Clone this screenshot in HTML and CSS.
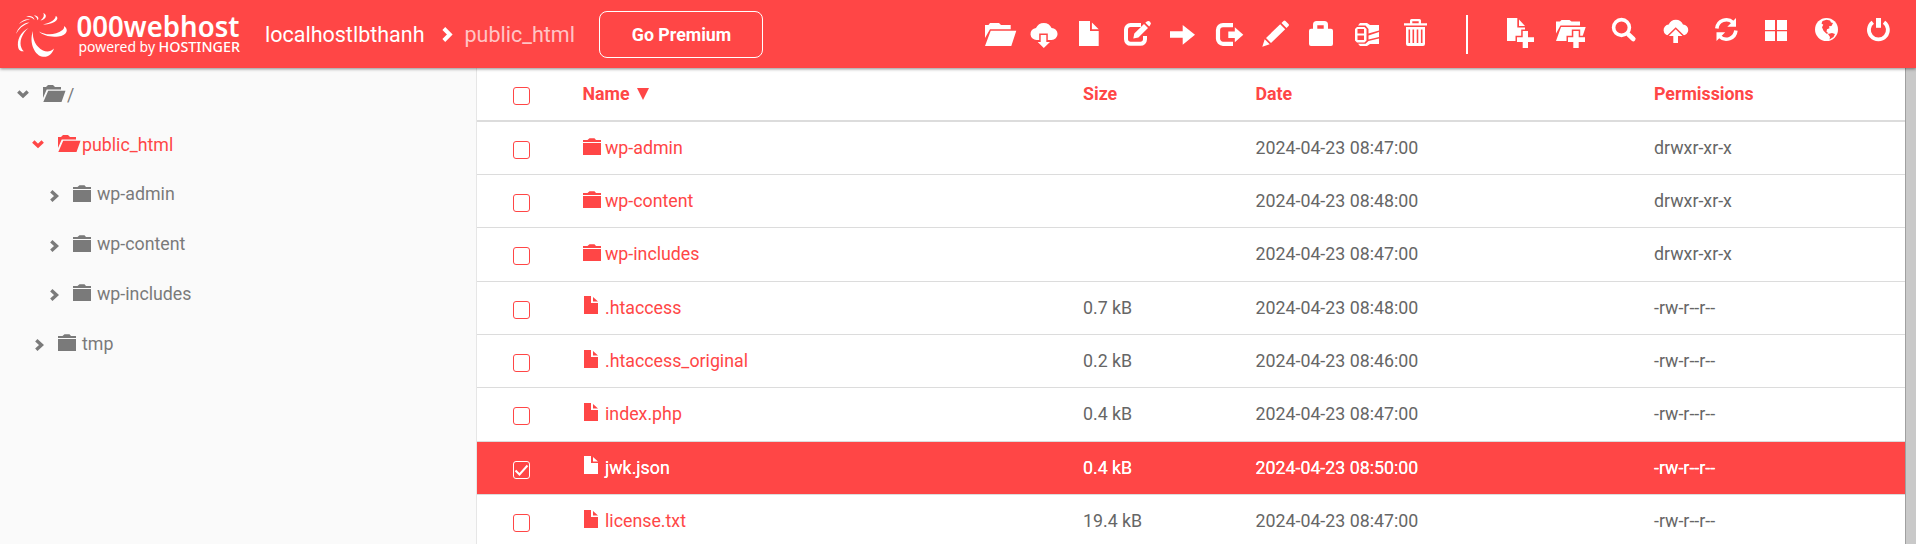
FILE: index.html
```html
<!DOCTYPE html>
<html lang="en">
<head>
<meta charset="utf-8">
<title>File manager</title>
<link rel="stylesheet" href="styles.css">
</head>
<body>
<svg class="sprite" aria-hidden="true">
  <symbol id="folder" viewBox="0 0 18 17"><path d="M0 2h4.500L6.500.2h5L13 2h5v2H0zM0 5h18v12H0z"/></symbol>
  <symbol id="folder-open" viewBox="0 0 23 17"><path d="M0 2h3L5 0h5l2 2h6v2.600H3.700L0 13zM5.200 5.700H22.500L18.500 17H.3z"/></symbol>
  <symbol id="file" viewBox="0 0 14 18"><path d="M0 0h7v7h7v11H0zM9 1l5 4.500H9z"/></symbol>
  <symbol id="right" viewBox="0 0 9 12"><path d="M1.300 1.300 6.500 6 1.300 10.700" class="chev"/></symbol>
  <symbol id="down" viewBox="0 0 12 9"><path d="M1.300 1.500 6 6 10.700 1.500" class="chev"/></symbol>
</svg>

<header class="topbar">
  <svg class="logo" width="184" height="68" viewBox="0 0 184 68">
    <g transform="translate(-10 0)">
      <path d="M39 31.500c7 4 16 4 23.500-1.500 1.600-1.200 1.800-2.600 1.400-4 2.500 1.600 3.500 4 2.500 6-1.200 2.400-4 4-8 4.400C50.500 37.400 43 35.500 39 31.500z"/>
      <path d="M33 31c-1 8 3 16 10 19.500 4.500 2 8 .8 11-2-1.500 5-5.500 8.800-11 8.300C35 56 28.500 43 33 31z"/>
      <path d="M28.500 28c-7 6-9.500 14-7 20 .5 1.500 1.500 2.600 2.500 3.300-3 .2-5-.8-5.700-3.300C16.500 40 20.500 32 28.500 28z"/>
      <path d="M29.500 22.500c-6.500.5-11.500 5-13.500 11.500 2.500-5 7-9 13.500-11.500z"/>
      <path d="M30 19.500c-4-1-8 1-11 4.500 3.500-2.500 7-4 11-4.500z"/>
      <path d="M34.500 20c-.5-3.500-5-5-8.500-3.300 3.500-.2 6.500.8 8.500 3.300z"/>
      <path d="M37.500 20.200c2-2 .5-4.500-3.500-5 1.500 1.200 3.300 2.500 3.500 5z"/>
      <path d="M40.500 20.500c6-1 7-6 2.800-7.500 1.200 2.200.5 5-2.800 7.500z"/>
      <path d="M43 24.500c6 0 12-1.500 14-5 .8-1.500.3-3-1.300-3.500 0 3.500-5 7-12.700 8.500z"/>
    </g>
    <text class="logo-name" x="66.500" y="37" textLength="163" lengthAdjust="spacingAndGlyphs">000webhost</text>
    <text class="logo-by" x="68.500" y="51.500" textLength="76.500" lengthAdjust="spacingAndGlyphs">powered by</text>
    <text class="logo-host" x="148.500" y="51.500" textLength="81.500" lengthAdjust="spacingAndGlyphs">HOSTINGER</text>
  </svg>
  <nav class="crumbs">
    <span>localhostlbthanh</span>
    <svg width="11" height="15" viewBox="0 0 11 15"><path d="M1.800 1.500 7.800 7.500 1.800 13.500" class="crumb-arrow"/></svg>
    <span class="current">public_html</span>
  </nav>
  <a class="premium">Go Premium</a>

  <div class="tools">
    <svg viewBox="0 0 46 68"><path d="M8 25h3.500l1.500-2h9l2 2h9.700v4.200H13L8 38zM13.700 30.700H39.300L34.300 46H8z"/></svg>
    <svg viewBox="0 0 46 68"><path d="M14 40a6 6 0 0 1-1-12A8.500 8.500 0 0 1 28.600 28 6 6 0 0 1 28.500 40z"/><path class="cut" d="M17.700 35h5.600v7H27l-6.200 6-6.100-6h3z"/></svg>
    <svg viewBox="0 0 46 68"><path d="M10 21h11v10h8.700v15H10zM22.900 22.500l6.800 6.800h-6.800z"/></svg>
    <svg viewBox="0 0 46 68"><path class="line" stroke-width="4" d="M26 25H15.500a4.500 4.500 0 0 0-4.500 4.500V39.300a4.500 4.500 0 0 0 4.500 4.500H25.500a4.500 4.500 0 0 0 4.500-4.500V36"/><path d="M18.300 38.500l1-5L29 24l4 4-9.600 9.500zM30.300 22.700l1.200-.9a2.400 2.400 0 0 1 3.600 3.500l-.9 1.200z"/></svg>
    <svg viewBox="0 0 46 68"><path d="M9 31.300h12.700V25L34 34.800 21.700 44.700v-7H9z"/></svg>
    <svg viewBox="0 0 46 68"><path class="line" stroke-width="4.200" d="M26 25.100H16a5 5 0 0 0-5 5v8.700a5 5 0 0 0 5 5h10"/><path d="M21.300 31.500h6.500v-4.300l8.500 7.500-8.500 7.500v-4.300h-6.500z"/></svg>
    <svg viewBox="0 0 46 68"><path d="M9.300 46.700l2.400-7.400 5 5zM13 38L27.200 24.200l5 5L18 43zM28.500 23l2-2a1.500 1.500 0 0 1 2 0L35.500 24a1.500 1.500 0 0 1 0 2l-2 2z"/></svg>
    <svg viewBox="0 0 46 68"><path fill-rule="evenodd" d="M14 28.700v-4a3.700 3.700 0 0 1 3.700-3.700h7.600a3.700 3.700 0 0 1 3.700 3.700v4h3a2 2 0 0 1 2 2V44a2 2 0 0 1-2 2H12a2 2 0 0 1-2-2V30.700a2 2 0 0 1 2-2zM18.300 28.700h6.400v-3.400h-6.400z"/></svg>
    <svg viewBox="0 0 46 68"><path fill-rule="evenodd" d="M12 27h7.500l2 2v11.500l-2 2H12l-2-2V29zM12.500 29v4.500h6.500V29zM12.500 35.500v4.500h6.500v-4.500z"/><path d="M13 25.500l2-2.500h7l3 2h9v5.500l-10.500 3V29l-3-3.500zM23.500 35.500L34 32v5l-10.500 2.500zM13 43.700l2 2.300h7l3-2h9v-5.500L23.500 41l-3 2.700z"/></svg>
    <svg viewBox="0 0 46 68"><path fill-rule="evenodd" d="M13 23.200h6V20.500a1.500 1.500 0 0 1 1.500-1.500h8a1.500 1.500 0 0 1 1.500 1.500v2.700h6v2.300H13zM21.300 21.200v2h6.400v-2zM15 27h19v17a2 2 0 0 1-2 2H17a2 2 0 0 1-2-2zM17.500 29.500v13.500h1.600V29.500zM21.500 29.500v13.500h1.600V29.500zM25.700 29.500v13.500h1.600V29.500zM29.900 29.500v13.500h1.600V29.500z"/></svg>
  </div>
  <div class="divider"></div>
  <div class="tools wide">
    <svg viewBox="0 0 51 68"><path d="M9 18h10.300v9.500H27V41H9zM21 19.500l6 6.500h-6z"/><path class="cut" d="M24.700 31h5.300v6.300h6V42h-6v6h-5.300v-6H19v-4.700h5.700z"/></svg>
    <svg viewBox="0 0 51 68"><path d="M7 21.500h4l1.500-1.500h8l2 1.500h8.500v4H11.500L7 33.500zM12 27h24.700L32 41H7z"/><path class="cut" d="M24.300 31h5.400v6.300h6.300V42h-6.300v6h-5.400v-6H19v-4.700h5.300z"/></svg>
    <svg viewBox="0 0 51 68"><circle class="line" stroke-width="3.600" cx="21.500" cy="27.500" r="7.900"/><path class="line" stroke-width="4.600" stroke-linecap="round" d="M28.500 34.500L33.300 39"/></svg>
    <svg viewBox="0 0 51 68"><path d="M18.500 35.500a5.500 5.500 0 0 1-.8-11 7.800 7.800 0 0 1 14.300 0 5.500 5.500 0 0 1-.5 11z"/><path class="cut" d="M24.700 29.300l6.800 6.700H27v7h-4.700v-7h-4.500z"/></svg>
    <svg viewBox="0 0 51 68"><path class="line" stroke-width="3.600" d="M14.800 28.500A9.600 9.600 0 0 1 31 22.500M33.900 30.500A9.600 9.600 0 0 1 17.700 36.500"/><path d="M34 18v8.700h-8.700zM14.500 41v-8.700h8.700z"/></svg>
    <svg viewBox="0 0 51 68"><path d="M12 20h10v10H12zM24 20h10v10H24zM12 31.300h10V41H12zM24 31.300h10V41H24z"/></svg>
    <svg viewBox="0 0 51 68"><circle cx="22.500" cy="29.500" r="11.500"/><path class="land" d="M18.500 21l4-1.200 3.500.7 1 2 2 .5-1.500 3-2.500.2.500 2-2.500 1-.5 2.500 2 1.500-2 .5-3-3-1.500-3.500 1.300-2.500-1.800-1.200zM24 34l4-1 3 1-1.500 3-4 2.500.5-2.500z"/></svg>
    <svg viewBox="0 0 51 68"><path class="line" stroke-width="3.800" d="M17.800 22.200A9.500 9.500 0 1 0 29 22.200"/><path d="M21 18h5v9.800h-5z"/></svg>
  </div>
</header>

<main class="layout">
  <aside class="tree">
    <div class="node"><svg class="down"><use href="#down"/></svg><svg class="open"><use href="#folder-open"/></svg><span>/</span></div>
    <div class="node l1 active"><svg class="down"><use href="#down"/></svg><svg class="open"><use href="#folder-open"/></svg><span>public_html</span></div>
    <div class="node l2"><svg class="right"><use href="#right"/></svg><svg class="folder"><use href="#folder"/></svg><span>wp-admin</span></div>
    <div class="node l2"><svg class="right"><use href="#right"/></svg><svg class="folder"><use href="#folder"/></svg><span>wp-content</span></div>
    <div class="node l2"><svg class="right"><use href="#right"/></svg><svg class="folder"><use href="#folder"/></svg><span>wp-includes</span></div>
    <div class="node l1"><svg class="right"><use href="#right"/></svg><svg class="folder"><use href="#folder"/></svg><span>tmp</span></div>
  </aside>

  <section class="files">
    <div class="row head"><i class="box"></i><b class="name">Name <svg class="sort" viewBox="0 0 12 12"><path d="M0 0h12L6 12z"/></svg></b><b>Size</b><b>Date</b><b>Permissions</b></div>
    <div class="row"><i class="box"></i><a class="name"><svg class="folder"><use href="#folder"/></svg>wp-admin</a><span></span><span>2024-04-23 08:47:00</span><span>drwxr-xr-x</span></div>
    <div class="row"><i class="box"></i><a class="name"><svg class="folder"><use href="#folder"/></svg>wp-content</a><span></span><span>2024-04-23 08:48:00</span><span>drwxr-xr-x</span></div>
    <div class="row"><i class="box"></i><a class="name"><svg class="folder"><use href="#folder"/></svg>wp-includes</a><span></span><span>2024-04-23 08:47:00</span><span>drwxr-xr-x</span></div>
    <div class="row"><i class="box"></i><a class="name"><svg class="file"><use href="#file"/></svg>.htaccess</a><span>0.7 kB</span><span>2024-04-23 08:48:00</span><span>-rw-r--r--</span></div>
    <div class="row"><i class="box"></i><a class="name"><svg class="file"><use href="#file"/></svg>.htaccess_original</a><span>0.2 kB</span><span>2024-04-23 08:46:00</span><span>-rw-r--r--</span></div>
    <div class="row"><i class="box"></i><a class="name"><svg class="file"><use href="#file"/></svg>index.php</a><span>0.4 kB</span><span>2024-04-23 08:47:00</span><span>-rw-r--r--</span></div>
    <div class="row selected"><i class="box"><svg viewBox="0 0 15 16"><path d="M1.500 8.500 5.500 12.500 13.500 3.500"/></svg></i><a class="name"><svg class="file"><use href="#file"/></svg>jwk.json</a><span>0.4 kB</span><span>2024-04-23 08:50:00</span><span>-rw-r--r--</span></div>
    <div class="row"><i class="box"></i><a class="name"><svg class="file"><use href="#file"/></svg>license.txt</a><span>19.4 kB</span><span>2024-04-23 08:47:00</span><span>-rw-r--r--</span></div>
  </section>
  <div class="scrollbar"></div>
</main>
</body>
</html>
```
FILE: styles.css
```css
* { box-sizing: border-box; }

body {
  margin: 0;
  height: 544px;
  overflow: hidden;
  background: #fff;
  color: #666;
  font: 17.800px/24px Roboto, sans-serif;
}

svg { fill: currentColor; flex: none; }
.sprite { display: none; }
.chev { fill: none; stroke: currentColor; stroke-width: 3.4; }

/* Top bar */
.topbar {
  display: flex;
  align-items: center;
  position: relative;
  height: 68px;
  padding-left: 10px;
  background: #ff4646;
  color: #fff;
  box-shadow: 0 1px 3px rgba(0, 0, 0, .45);
}
.logo { width: 184px; overflow: visible; }
.logo-name { font: 600 28px "Noto Sans", "Open Sans", sans-serif; }
.logo-by { font: 400 14px "Noto Sans", "Open Sans", sans-serif; }
.logo-host { font: 500 14px "Noto Sans", "Open Sans", sans-serif; }
.crumbs {
  display: flex;
  align-items: center;
  width: 333px;
  margin-left: 71px;
  padding-top: 1px;
  font-size: 21.500px;
}
.crumbs svg { margin: 0 12px 0 17px; }
.crumb-arrow { fill: none; stroke: #fff; stroke-width: 4; }
.current { color: rgba(255, 255, 255, .7); }
.premium {
  width: 164px;
  height: 47px;
  margin-left: 1px;
  padding-left: 1px;
  border: 1px solid #fff;
  border-radius: 8px;
  font-weight: 700;
  line-height: 45px;
  text-align: center;
}
.tools { display: flex; margin-left: 214px; }
.tools svg { width: 46px; height: 68px; }
.tools .line { fill: none; stroke: #fff; }
.tools .cut { stroke: #ff4646; stroke-width: 3; paint-order: stroke; }
.tools .land { fill: #ff4646; }
.divider { width: 2px; height: 39px; margin-left: 29px; background: #fff; }
.tools.wide { margin-left: 30px; }
.tools.wide svg { width: 51px; }

/* Columns under the bar */
.layout { display: flex; height: 476px; }

.tree {
  width: 477px;
  padding-top: 2px;
  background: #fafafa;
  border-right: 1px solid #e6e6e6;
  color: #7a7a7a;
}
.node { display: flex; align-items: center; height: 49.750px; padding-left: 17px; }
.node.l1 { padding-left: 32px; }
.node.l2 { padding-left: 47px; }
.node.active { color: #ff4646; }
.down { width: 12px; height: 9px; margin-right: 14px; }
.right { width: 9px; height: 12px; margin: 3px 14px 0 3px; }
.open { width: 23px; height: 17px; margin: 0 1px 2px 0; }
.folder { width: 18px; height: 17px; margin: 0 6px 2px 0; }
.file { width: 14px; height: 18px; margin: 0 7px 5px 2px; }

/* File table */
.files { width: 1428px; overflow: hidden; }
.row {
  display: grid;
  grid-template-columns: 106px 500px 172.500px 398.500px 1fr;
  align-items: center;
  height: 53.333px;
  border-bottom: 1px solid #dcdcdc;
}
.row.head {
  height: 53.667px;
  border-bottom-width: 2px;
  color: #ff4646;
}
.name { display: flex; align-items: center; color: #ff4646; }
.row .name { margin-left: -1px; }
.row.head .name { margin-left: -.5px; }
.name .folder { margin: 0 4px 3px 1px; }
.sort { width: 12px; height: 12px; margin-left: 7px; }
.box {
  display: block;
  width: 17px;
  height: 18px;
  margin: 4px 0 0 36px;
  border: 1px solid #ff4646;
  border-radius: 3px;
}
.selected { background: #ff4646; color: #fff; text-shadow: 0 0 .5px #fff; }
.selected .name { color: #fff; }
.selected .box { border-color: #fff; }
.selected svg { display: block; }
.box path { fill: none; stroke: #fff; stroke-width: 2; }

.scrollbar { width: 11px; background: #c9c9c9; border-left: 1px solid #a0a0a0; }
```
